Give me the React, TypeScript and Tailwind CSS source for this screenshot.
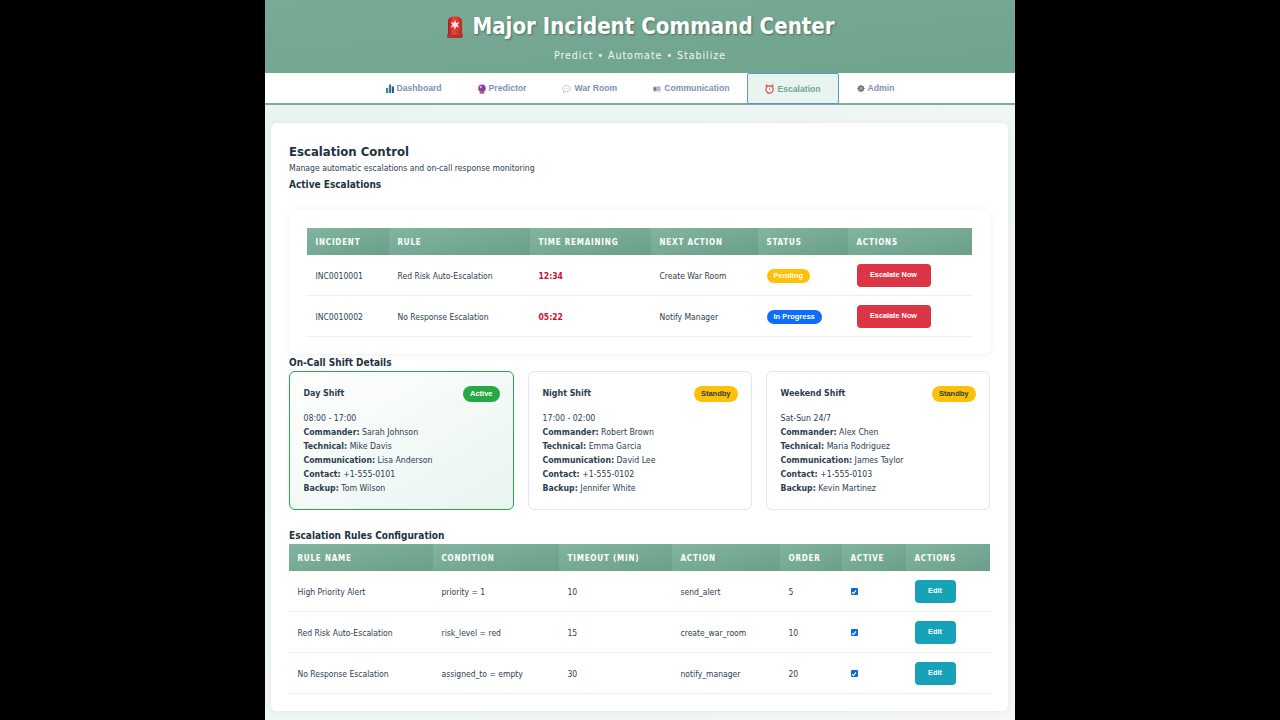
import React from "react";

const Siren = () => (
  <svg width="20" height="24" viewBox="0 0 20 24" className="shrink-0">
    <defs>
      <linearGradient id="sr" x1="0" x2="1" y1="0" y2="0">
        <stop offset="0" stopColor="#a81c1c" />
        <stop offset="0.4" stopColor="#f0403a" />
        <stop offset="1" stopColor="#c22420" />
      </linearGradient>
    </defs>
    <rect x="2" y="18.500" width="16" height="4.500" rx="2" fill="#a23a2c" />
    <path d="M3 6.500C3 3 5.500 1.500 10 1.500S17 3 17 6.500V20H3z" fill="url(#sr)" />
    <path d="M10 5l1.200 3 3.200-.9-1.900 2.700 1.900 2.700-3.200-.9L10 14.600l-1.200-3-3.200.9 1.900-2.700-1.900-2.700 3.200.9z" fill="#ffe9e4" />
  </svg>
);
const IcoChart = () => (
  <svg width="8" height="9" viewBox="0 0 8 9" className="shrink-0">
    <rect x="0" y="4" width="2.200" height="5" fill="#3f9a4a" />
    <rect x="2.900" y="0.500" width="2.200" height="8.500" fill="#3a6fb0" />
    <rect x="5.800" y="2.500" width="2.200" height="6.500" fill="#2c5a8f" />
  </svg>
);
const IcoBall = () => (
  <svg width="8" height="10" viewBox="0 0 8 10" className="shrink-0">
    <circle cx="4" cy="4.200" r="3.800" fill="#8a3f9e" />
    <circle cx="2.900" cy="3" r="1.200" fill="#d9a8e2" />
    <rect x="1.500" y="7.600" width="5" height="2.200" rx="0.800" fill="#b0607a" />
  </svg>
);
const IcoBubble = () => (
  <svg width="9" height="10" viewBox="0 0 10 10" className="shrink-0">
    <path d="M5 1c2.400 0 4.300 1.500 4.300 3.500S7.400 8 5 8c-.5 0-1 0-1.400-.2L1.800 9.200l.4-2C1.200 6.600.7 5.600.7 4.500.7 2.500 2.600 1 5 1z" fill="#fff" stroke="#a8adb5" strokeWidth="0.700" />
    <circle cx="3.200" cy="4.500" r="0.500" fill="#9aa0a8" />
    <circle cx="5" cy="4.500" r="0.500" fill="#9aa0a8" />
    <circle cx="6.800" cy="4.500" r="0.500" fill="#9aa0a8" />
  </svg>
);
const IcoNews = () => (
  <svg width="8" height="8" viewBox="0 0 9 8" className="shrink-0">
    <rect x="0" y="1" width="9" height="6" fill="#c9d2de" />
    <rect x="0.800" y="2" width="3" height="4" fill="#5d7ea8" />
    <rect x="4.500" y="2.200" width="3.600" height="0.800" fill="#8d99a8" />
    <rect x="4.500" y="4" width="3.600" height="0.800" fill="#8d99a8" />
  </svg>
);
const IcoAlarm = () => (
  <svg width="9" height="10" viewBox="0 0 10 11" className="shrink-0">
    <circle cx="5" cy="6" r="4" fill="#fff" stroke="#d9443f" strokeWidth="1.300" />
    <path d="M5 3.800V6l1.500 1" stroke="#555" strokeWidth="0.700" fill="none" />
    <path d="M0.600 2.600 2.600 0.800M9.400 2.600 7.400 0.800" stroke="#d9443f" strokeWidth="1.300" />
  </svg>
);
const IcoGear = () => (
  <svg width="8" height="9" viewBox="0 0 10 10" className="shrink-0">
    <circle cx="5" cy="5" r="3.100" fill="#9a9da0" stroke="#6f7276" strokeWidth="1.600" />
    <path d="M5 .4v1.600M5 8v1.600M.4 5H2M8 5h1.600M1.700 1.700l1.200 1.200M7.100 7.100l1.200 1.200M8.300 1.700 7.100 2.900M2.900 7.100 1.700 8.300" stroke="#6f7276" strokeWidth="1.200" />
  </svg>
);

const tabs = [
  { label: "Dashboard", icon: <IcoChart /> },
  { label: "Predictor", icon: <IcoBall /> },
  { label: "War Room", icon: <IcoBubble /> },
  { label: "Communication", icon: <IcoNews /> },
  { label: "Escalation", icon: <IcoAlarm />, active: true },
  { label: "Admin", icon: <IcoGear /> },
];

const thBase =
  "h-[27px] pl-[8.500px] pr-[8px] pt-[2px] text-left align-middle text-[8px] font-bold tracking-[0.8px] text-white bg-gradient-to-br from-[#82b5a0] to-[#6c9f8a]";
const tdBase = "h-[41px] pl-[8.500px] pr-[8px] pt-[1px] align-middle border-b border-[#eef1f1] text-[#2c3e50]";
const tdText = "h-[41px] pl-[8.500px] pr-[8px] pt-[3px] align-middle border-b border-[#eef1f1] text-[#2c3e50]";

const Badge = ({ text, cls }: { text: string; cls: string }) => (
  <span className={`inline-flex h-[14px] items-center rounded-full px-[7px] font-['Liberation_Sans',sans-serif] text-[7.500px] font-bold ${cls}`}>
    {text}
  </span>
);

const ActionBtn = ({ text, cls }: { text: string; cls: string }) => (
  <button className={`inline-flex h-[23px] items-center justify-center rounded-[4px] align-middle font-['Liberation_Sans',sans-serif] text-[7.300px] font-bold text-white ${cls}`}>
    {text}
  </button>
);

const active = [
  ["INC0010001", "Red Risk Auto-Escalation", "12:34", "Create War Room", "Pending", "bg-[#ffc107] text-white"],
  ["INC0010002", "No Response Escalation", "05:22", "Notify Manager", "In Progress", "bg-[#0d6efd] text-white"],
];

const shifts = [
  { name: "Day Shift", badge: "Active", time: "08:00 - 17:00", c: "Sarah Johnson", t: "Mike Davis", m: "Lisa Anderson", p: "+1-555-0101", b: "Tom Wilson", on: true },
  { name: "Night Shift", badge: "Standby", time: "17:00 - 02:00", c: "Robert Brown", t: "Emma Garcia", m: "David Lee", p: "+1-555-0102", b: "Jennifer White" },
  { name: "Weekend Shift", badge: "Standby", time: "Sat-Sun 24/7", c: "Alex Chen", t: "Maria Rodriguez", m: "James Taylor", p: "+1-555-0103", b: "Kevin Martinez" },
];

const rules = [
  ["High Priority Alert", "priority = 1", "10", "send_alert", "5"],
  ["Red Risk Auto-Escalation", "risk_level = red", "15", "create_war_room", "10"],
  ["No Response Escalation", "assigned_to = empty", "30", "notify_manager", "20"],
];

const Check = () => (
  <span className="inline-flex h-[7px] w-[7px] items-center justify-center rounded-[1px] bg-[#0b68d8] align-middle">
    <svg width="6" height="6" viewBox="0 0 6 6">
      <path d="M1 3.200 2.500 4.600 5 1.400" stroke="#fff" strokeWidth="1.100" fill="none" />
    </svg>
  </span>
);

export default function App() {
  return (
    <div className="flex min-h-[720px] justify-center overflow-hidden bg-black font-['DejaVu_Sans_Condensed','DejaVu_Sans',sans-serif]">
      <div className="h-[720px] w-[750px] overflow-hidden bg-gradient-to-br from-[#e8f4ef] to-[#f5f7f8]">
        <header className="flex h-[73px] flex-col items-center bg-gradient-to-br from-[#78aa95] to-[#70a38d] text-white">
          <h1 className="mt-[14px] flex h-[25px] items-center gap-[7px] text-[22.100px] font-bold leading-[25px] [text-shadow:1px_1px_2px_rgba(0,0,0,0.35)]">
            <Siren />
            <span>Major Incident Command Center</span>
          </h1>
          <p className="mt-[9px] text-[10.500px] leading-[14px] tracking-[1px] text-[#eef6f2]">Predict • Automate • Stabilize</p>
        </header>

        <nav className="flex h-[32px] justify-center border-b-2 border-[#7cae99] bg-white font-['Liberation_Sans',sans-serif] text-[8.650px] font-bold text-[#7f90b2]">
          {tabs.map((t) =>
            t.active ? (
              <div key={t.label} className="flex h-[31px] items-center gap-[3px] rounded-[2px] border-[1.500px] border-[#5f97cb] bg-[#e8f4ef] px-[17px] pt-[1px] text-[#70a68f]">
                {t.icon}
                <span>{t.label}</span>
              </div>
            ) : (
              <div key={t.label} className="flex h-[30px] items-center gap-[3px] px-[18px] pt-[1px]">
                {t.icon}
                <span>{t.label}</span>
              </div>
            )
          )}
        </nav>

        <main className="ml-[6px] mr-[7px] mt-[18px] h-[588px] rounded-[6px] bg-white px-[18px] pt-[20px] text-[#2c3e50] shadow-[0_1px_8px_rgba(0,0,0,0.06)]">
          <h2 className="text-[13px] font-bold leading-[17px] text-[#233240]">Escalation Control</h2>
          <p className="mt-[2px] text-[8.600px] leading-[13px]">Manage automatic escalations and on-call response monitoring</p>
          <h3 className="mt-[3px] text-[10px] font-bold leading-[13px] text-[#233240]">Active Escalations</h3>

          <section className="mt-[19px] rounded-[6px] bg-white p-[18px] pb-[17px] shadow-[0_1px_8px_rgba(0,0,0,0.06)]">
            <table className="w-full table-fixed border-separate border-spacing-0 text-[8.500px]">
              <colgroup>
                <col className="w-[82px]" />
                <col className="w-[141px]" />
                <col className="w-[121px]" />
                <col className="w-[107px]" />
                <col className="w-[90px]" />
                <col className="w-[124px]" />
              </colgroup>
              <thead>
                <tr>
                  {["INCIDENT", "RULE", "TIME REMAINING", "NEXT ACTION", "STATUS", "ACTIONS"].map((h) => (
                    <th key={h} className={thBase}>{h}</th>
                  ))}
                </tr>
              </thead>
              <tbody>
                {active.map((r) => (
                  <tr key={r[0]}>
                    <td className={tdText}>{r[0]}</td>
                    <td className={tdText}>{r[1]}</td>
                    <td className={`${tdText} font-bold text-[#c8102e]`}>{r[2]}</td>
                    <td className={tdText}>{r[3]}</td>
                    <td className={tdBase}><Badge text={r[4]} cls={r[5]} /></td>
                    <td className={tdBase}><ActionBtn text="Escalate Now" cls="w-[74px] bg-[#dc3545]" /></td>
                  </tr>
                ))}
              </tbody>
            </table>
          </section>

          <h3 className="mt-[2px] text-[10px] font-bold leading-[13px] text-[#233240]">On-Call Shift Details</h3>
          <section className="mt-[2px] grid grid-cols-[225px_224px_224px] gap-[14px]">
            {shifts.map((s) => (
              <div
                key={s.name}
                className={`h-[139px] rounded-[6px] border px-[13.500px] pt-[14px] ${s.on ? "border-[#28a745] bg-gradient-to-br from-white to-[#e8f4ef]" : "border-[#e2e6e8] bg-white"}`}
              >
                <div className="flex h-[16px] items-center justify-between">
                  <span className="text-[8.800px] font-bold">{s.name}</span>
                  <span className={`inline-flex h-[16px] items-center rounded-full px-[7px] font-['Liberation_Sans',sans-serif] text-[7.500px] font-bold ${s.on ? "bg-[#28a745] text-white" : "bg-[#ffc107] text-[#2c3e50]"}`}>
                    {s.badge}
                  </span>
                </div>
                <div className="mt-[9px] text-[8.700px] leading-[14.100px]">
                  <div>{s.time}</div>
                  <div><b>Commander:</b> {s.c}</div>
                  <div><b>Technical:</b> {s.t}</div>
                  <div><b>Communication:</b> {s.m}</div>
                  <div><b>Contact:</b> {s.p}</div>
                  <div><b>Backup:</b> {s.b}</div>
                </div>
              </div>
            ))}
          </section>

          <h3 className="mt-[19px] text-[10px] font-bold leading-[13px] text-[#233240]">Escalation Rules Configuration</h3>
          <table className="mt-[2px] w-full table-fixed border-separate border-spacing-0 text-[8.500px]">
            <colgroup>
              <col className="w-[144px]" />
              <col className="w-[126px]" />
              <col className="w-[113px]" />
              <col className="w-[108px]" />
              <col className="w-[62px]" />
              <col className="w-[64px]" />
              <col className="w-[84px]" />
            </colgroup>
            <thead>
              <tr>
                {["RULE NAME", "CONDITION", "TIMEOUT (MIN)", "ACTION", "ORDER", "ACTIVE", "ACTIONS"].map((h) => (
                  <th key={h} className={thBase}>{h}</th>
                ))}
              </tr>
            </thead>
            <tbody>
              {rules.map((r) => (
                <tr key={r[0]}>
                  {r.map((c, i) => (
                    <td key={i} className={tdText}>{c}</td>
                  ))}
                  <td className={tdBase}><Check /></td>
                  <td className={tdBase}><ActionBtn text="Edit" cls="w-[41px] bg-[#17a2b8]" /></td>
                </tr>
              ))}
            </tbody>
          </table>
        </main>
      </div>
    </div>
  );
}
